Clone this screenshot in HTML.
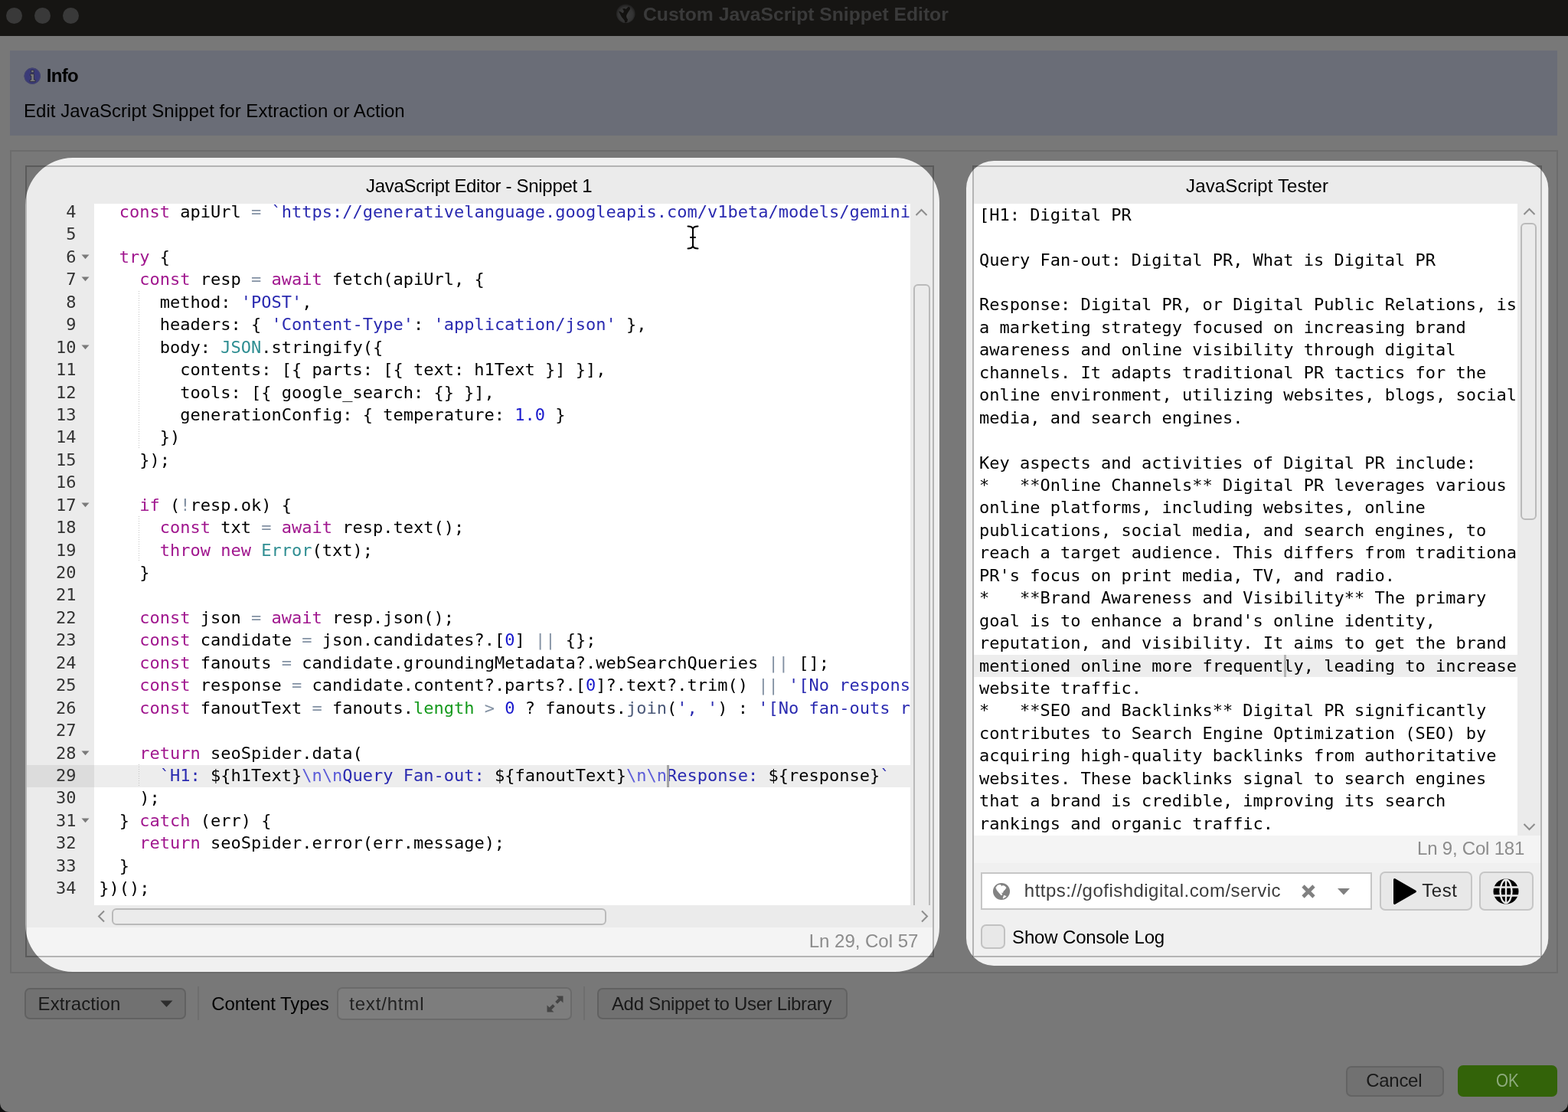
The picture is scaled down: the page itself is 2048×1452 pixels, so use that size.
<!DOCTYPE html>
<html lang="en"><head><meta charset="utf-8"><title>Custom JavaScript Snippet Editor</title>
<style>
*{box-sizing:border-box;margin:0;padding:0}
html,body{width:2048px;height:1452px;overflow:hidden;background:#f0f0f0}
body{position:relative;font-family:"Liberation Sans",sans-serif;font-size:24px;color:#000}
#root{position:absolute;left:0;top:0;width:2048px;height:1452px;will-change:transform}
.abs{position:absolute}
.t{position:absolute;white-space:pre;line-height:1}
.mono{font-family:"DejaVu Sans Mono","Liberation Mono",monospace;font-size:22.01px}
#titlebar{left:0;top:0;width:2048px;height:47px;background:#2c2a27}
.tl{position:absolute;top:9.5px;width:21.5px;height:21.5px;border-radius:50%;background:#727272}
#info{left:13px;top:66px;width:2021px;height:111px;background:#d5dbee}
#group{left:13px;top:196px;width:2022px;height:1075px;border:2px solid #d8d8d8;background:#f0f0f0}
.panel{position:absolute;border:2px solid #b4b4b4;background:#ebebeb}
#lp{left:33px;top:216px;width:1187px;height:1034px}
#rp{left:1270px;top:216px;width:744px;height:1034px}
.code{position:absolute;overflow:hidden;background:#fff}
.ln{position:absolute;left:0;height:29.46px;line-height:29.46px;white-space:pre}
.k{color:#a0168e}.s{color:#2a2ab0}.n{color:#1a1acd}.o{color:#8391a3}.g{color:#14991c}.f{color:#4a5878}.v{color:#2f8e92}.e{color:#5c5cd8}
.sb{position:absolute;border:2px solid #bababa;border-radius:6px;background:#ebebeb}
.btn{position:absolute;border:2px solid #c6c6c6;border-radius:7px;background:#e8e8e8}
</style></head>
<body>
<div id="root">
<div id="titlebar" class="abs">
<div class="tl" style="left:7.5px"></div>
<div class="tl" style="left:44.5px"></div>
<div class="tl" style="left:81.5px"></div>
</div>
<div id="title-text" class="t" style="left:840.00px;top:6.00px;font-size:24.7px;line-height:26px;color:#747474;font-weight:bold;letter-spacing:-0.013px">Custom JavaScript Snippet Editor</div>
<div id="info" class="abs"></div>
<div id="info-h" class="t" style="left:60.78px;top:86.00px;font-size:24px;line-height:26px;color:#000;font-weight:bold;letter-spacing:-0.683px">Info</div>
<div id="info-p" class="t" style="left:31.02px;top:132.00px;font-size:24px;line-height:26px;color:#000;letter-spacing:0.031px">Edit JavaScript Snippet for Extraction or Action</div>
<div id="group" class="abs"></div>
<div id="lp" class="panel"></div>
<div id="rp" class="panel"></div>
<div id="lp-title" class="t" style="left:478.10px;top:229.75px;font-size:24px;line-height:26px;color:#000;letter-spacing:-0.311px">JavaScript Editor - Snippet 1</div>
<div id="rp-title" class="t" style="left:1549.10px;top:229.75px;font-size:24px;line-height:26px;color:#000;letter-spacing:0.143px">JavaScript Tester</div>
<div id="gutter" class="code mono" style="left:35px;top:266px;width:88px;height:916px;background:#ebebeb;color:#333">
<div class="abs" style="left:0;top:733.00px;width:100%;height:29px;background:#dcdcdc"></div>
<div class="ln" style="top:-4.00px;width:64.5px;text-align:right">4</div>
<div class="ln" style="top:25.44px;width:64.5px;text-align:right">5</div>
<div class="ln" style="top:54.88px;width:64.5px;text-align:right">6</div>
<svg class="abs" style="left:70.5px;top:65.88px" width="11" height="7" viewBox="0 0 11 7"><path d="M0.5 0.5 L10.5 0.5 L5.5 6.2 Z" fill="#7a7a7a"/></svg>
<div class="ln" style="top:84.32px;width:64.5px;text-align:right">7</div>
<svg class="abs" style="left:70.5px;top:95.32px" width="11" height="7" viewBox="0 0 11 7"><path d="M0.5 0.5 L10.5 0.5 L5.5 6.2 Z" fill="#7a7a7a"/></svg>
<div class="ln" style="top:113.76px;width:64.5px;text-align:right">8</div>
<div class="ln" style="top:143.20px;width:64.5px;text-align:right">9</div>
<div class="ln" style="top:172.64px;width:64.5px;text-align:right">10</div>
<svg class="abs" style="left:70.5px;top:183.64px" width="11" height="7" viewBox="0 0 11 7"><path d="M0.5 0.5 L10.5 0.5 L5.5 6.2 Z" fill="#7a7a7a"/></svg>
<div class="ln" style="top:202.08px;width:64.5px;text-align:right">11</div>
<div class="ln" style="top:231.52px;width:64.5px;text-align:right">12</div>
<div class="ln" style="top:260.96px;width:64.5px;text-align:right">13</div>
<div class="ln" style="top:290.40px;width:64.5px;text-align:right">14</div>
<div class="ln" style="top:319.84px;width:64.5px;text-align:right">15</div>
<div class="ln" style="top:349.28px;width:64.5px;text-align:right">16</div>
<div class="ln" style="top:378.72px;width:64.5px;text-align:right">17</div>
<svg class="abs" style="left:70.5px;top:389.72px" width="11" height="7" viewBox="0 0 11 7"><path d="M0.5 0.5 L10.5 0.5 L5.5 6.2 Z" fill="#7a7a7a"/></svg>
<div class="ln" style="top:408.16px;width:64.5px;text-align:right">18</div>
<div class="ln" style="top:437.60px;width:64.5px;text-align:right">19</div>
<div class="ln" style="top:467.04px;width:64.5px;text-align:right">20</div>
<div class="ln" style="top:496.48px;width:64.5px;text-align:right">21</div>
<div class="ln" style="top:525.92px;width:64.5px;text-align:right">22</div>
<div class="ln" style="top:555.36px;width:64.5px;text-align:right">23</div>
<div class="ln" style="top:584.80px;width:64.5px;text-align:right">24</div>
<div class="ln" style="top:614.24px;width:64.5px;text-align:right">25</div>
<div class="ln" style="top:643.68px;width:64.5px;text-align:right">26</div>
<div class="ln" style="top:673.12px;width:64.5px;text-align:right">27</div>
<div class="ln" style="top:702.56px;width:64.5px;text-align:right">28</div>
<svg class="abs" style="left:70.5px;top:713.56px" width="11" height="7" viewBox="0 0 11 7"><path d="M0.5 0.5 L10.5 0.5 L5.5 6.2 Z" fill="#7a7a7a"/></svg>
<div class="ln" style="top:732.00px;width:64.5px;text-align:right">29</div>
<div class="ln" style="top:761.44px;width:64.5px;text-align:right">30</div>
<div class="ln" style="top:790.88px;width:64.5px;text-align:right">31</div>
<svg class="abs" style="left:70.5px;top:801.88px" width="11" height="7" viewBox="0 0 11 7"><path d="M0.5 0.5 L10.5 0.5 L5.5 6.2 Z" fill="#7a7a7a"/></svg>
<div class="ln" style="top:820.32px;width:64.5px;text-align:right">32</div>
<div class="ln" style="top:849.76px;width:64.5px;text-align:right">33</div>
<div class="ln" style="top:879.20px;width:64.5px;text-align:right">34</div>
</div>
<div id="code" class="code mono" style="left:123px;top:266px;width:1066px;height:916px">
<div class="abs" style="left:0;top:733.00px;width:100%;height:29px;background:#ededed"></div>
<div class="abs" style="left:58px;top:113.76px;width:1px;height:206.08px;background:repeating-linear-gradient(to bottom,#c4c4c4 0 1px,transparent 1px 3px)"></div>
<div class="abs" style="left:58px;top:408.16px;width:1px;height:58.88px;background:repeating-linear-gradient(to bottom,#c4c4c4 0 1px,transparent 1px 3px)"></div>
<div class="abs" style="left:58px;top:732.00px;width:1px;height:29.44px;background:repeating-linear-gradient(to bottom,#c4c4c4 0 1px,transparent 1px 3px)"></div>
<div class="ln" style="left:6.3px;top:-4.00px">  <span class="k">const</span> apiUrl <span class="o">=</span> <span class="s">`https://generativelanguage.googleapis.com/v1beta/models/gemini</span></div>
<div class="ln" style="left:6.3px;top:25.44px"></div>
<div class="ln" style="left:6.3px;top:54.88px">  <span class="k">try</span> {</div>
<div class="ln" style="left:6.3px;top:84.32px">    <span class="k">const</span> resp <span class="o">=</span> <span class="k">await</span> fetch(apiUrl, {</div>
<div class="ln" style="left:6.3px;top:113.76px">      method: <span class="s">'POST'</span>,</div>
<div class="ln" style="left:6.3px;top:143.20px">      headers: { <span class="s">'Content-Type'</span>: <span class="s">'application/json'</span> },</div>
<div class="ln" style="left:6.3px;top:172.64px">      body: <span class="v">JSON</span>.stringify({</div>
<div class="ln" style="left:6.3px;top:202.08px">        contents: [{ parts: [{ text: h1Text }] }],</div>
<div class="ln" style="left:6.3px;top:231.52px">        tools: [{ google_search: {} }],</div>
<div class="ln" style="left:6.3px;top:260.96px">        generationConfig: { temperature: <span class="n">1.0</span> }</div>
<div class="ln" style="left:6.3px;top:290.40px">      })</div>
<div class="ln" style="left:6.3px;top:319.84px">    });</div>
<div class="ln" style="left:6.3px;top:349.28px"></div>
<div class="ln" style="left:6.3px;top:378.72px">    <span class="k">if</span> (<span class="o">!</span>resp.ok) {</div>
<div class="ln" style="left:6.3px;top:408.16px">      <span class="k">const</span> txt <span class="o">=</span> <span class="k">await</span> resp.text();</div>
<div class="ln" style="left:6.3px;top:437.60px">      <span class="k">throw</span> <span class="k">new</span> <span class="v">Error</span>(txt);</div>
<div class="ln" style="left:6.3px;top:467.04px">    }</div>
<div class="ln" style="left:6.3px;top:496.48px"></div>
<div class="ln" style="left:6.3px;top:525.92px">    <span class="k">const</span> json <span class="o">=</span> <span class="k">await</span> resp.json();</div>
<div class="ln" style="left:6.3px;top:555.36px">    <span class="k">const</span> candidate <span class="o">=</span> json.candidates?.[<span class="n">0</span>] <span class="o">||</span> {};</div>
<div class="ln" style="left:6.3px;top:584.80px">    <span class="k">const</span> fanouts <span class="o">=</span> candidate.groundingMetadata?.webSearchQueries <span class="o">||</span> [];</div>
<div class="ln" style="left:6.3px;top:614.24px">    <span class="k">const</span> response <span class="o">=</span> candidate.content?.parts?.[<span class="n">0</span>]?.text?.trim() <span class="o">||</span> <span class="s">'[No respons</span></div>
<div class="ln" style="left:6.3px;top:643.68px">    <span class="k">const</span> fanoutText <span class="o">=</span> fanouts.<span class="g">length</span> <span class="o">&gt;</span> <span class="n">0</span> ? fanouts.<span class="f">join</span>(<span class="s">', '</span>) : <span class="s">'[No fan-outs r</span></div>
<div class="ln" style="left:6.3px;top:673.12px"></div>
<div class="ln" style="left:6.3px;top:702.56px">    <span class="k">return</span> seoSpider.data(</div>
<div class="ln" style="left:6.3px;top:732.00px">      <span class="s">`H1: </span>${h1Text}<span class="e">\n\n</span><span class="s">Query Fan-out: </span>${fanoutText}<span class="e">\n\n</span><span class="s">Response: </span>${response}<span class="s">`</span></div>
<div class="ln" style="left:6.3px;top:761.44px">    );</div>
<div class="ln" style="left:6.3px;top:790.88px">  } <span class="k">catch</span> (err) {</div>
<div class="ln" style="left:6.3px;top:820.32px">    <span class="k">return</span> seoSpider.error(err.message);</div>
<div class="ln" style="left:6.3px;top:849.76px">  }</div>
<div class="ln" style="left:6.3px;top:879.20px">})();</div>
<div class="abs" style="left:748.00px;top:733.00px;width:3px;height:29px;background:#a2a2a2"></div>
</div>
<svg class="abs" style="left:1194.7px;top:271.5px" width="17" height="11" viewBox="0 0 17 11"><path d="M1.5 9 L8.5 2 L15.5 9" fill="none" stroke="#8c8c8c" stroke-width="2"/></svg>
<div class="sb" style="left:1192.5px;top:371px;width:22px;height:831px;border-bottom-left-radius:0;border-bottom-right-radius:0"></div>
<div class="abs" style="left:35px;top:1182px;width:1183px;height:29px;background:#ebebeb"></div>
<svg class="abs" style="left:127px;top:1188px" width="11" height="17" viewBox="0 0 11 17"><path d="M9 1.5 L2 8.5 L9 15.5" fill="none" stroke="#8c8c8c" stroke-width="2"/></svg>
<svg class="abs" style="left:1202px;top:1188px" width="11" height="17" viewBox="0 0 11 17"><path d="M2 1.5 L9 8.5 L2 15.5" fill="none" stroke="#8c8c8c" stroke-width="2"/></svg>
<div class="sb" style="left:146px;top:1186px;width:646px;height:22px"></div>
<div class="abs" style="left:35px;top:1211px;width:1183px;height:37px;background:#f4f4f4"></div>
<div id="lp-status" class="t" style="left:1056.77px;top:1216.00px;font-size:24px;line-height:26px;color:#8c8c8c;letter-spacing:-0.019px">Ln 29, Col 57</div>
<div id="rtext" class="code mono" style="left:1272px;top:266px;width:710px;height:825px">
<div class="abs" style="left:0;top:589.25px;width:100%;height:28.7px;background:#ededed"></div>
<div class="ln" style="left:7px;top:-0.30px">[H1: Digital PR</div>
<div class="ln" style="left:7px;top:29.14px"></div>
<div class="ln" style="left:7px;top:58.58px">Query Fan-out: Digital PR, What is Digital PR</div>
<div class="ln" style="left:7px;top:88.02px"></div>
<div class="ln" style="left:7px;top:117.46px">Response: Digital PR, or Digital Public Relations, is</div>
<div class="ln" style="left:7px;top:146.90px">a marketing strategy focused on increasing brand</div>
<div class="ln" style="left:7px;top:176.34px">awareness and online visibility through digital</div>
<div class="ln" style="left:7px;top:205.78px">channels. It adapts traditional PR tactics for the</div>
<div class="ln" style="left:7px;top:235.22px">online environment, utilizing websites, blogs, social</div>
<div class="ln" style="left:7px;top:264.66px">media, and search engines.</div>
<div class="ln" style="left:7px;top:294.10px"></div>
<div class="ln" style="left:7px;top:323.54px">Key aspects and activities of Digital PR include:</div>
<div class="ln" style="left:7px;top:352.98px">*   **Online Channels** Digital PR leverages various</div>
<div class="ln" style="left:7px;top:382.42px">online platforms, including websites, online</div>
<div class="ln" style="left:7px;top:411.86px">publications, social media, and search engines, to</div>
<div class="ln" style="left:7px;top:441.30px">reach a target audience. This differs from traditiona</div>
<div class="ln" style="left:7px;top:470.74px">PR's focus on print media, TV, and radio.</div>
<div class="ln" style="left:7px;top:500.18px">*   **Brand Awareness and Visibility** The primary</div>
<div class="ln" style="left:7px;top:529.62px">goal is to enhance a brand's online identity,</div>
<div class="ln" style="left:7px;top:559.06px">reputation, and visibility. It aims to get the brand</div>
<div class="ln" style="left:7px;top:588.50px">mentioned online more frequently, leading to increase</div>
<div class="ln" style="left:7px;top:617.94px">website traffic.</div>
<div class="ln" style="left:7px;top:647.38px">*   **SEO and Backlinks** Digital PR significantly</div>
<div class="ln" style="left:7px;top:676.82px">contributes to Search Engine Optimization (SEO) by</div>
<div class="ln" style="left:7px;top:706.26px">acquiring high-quality backlinks from authoritative</div>
<div class="ln" style="left:7px;top:735.70px">websites. These backlinks signal to search engines</div>
<div class="ln" style="left:7px;top:765.14px">that a brand is credible, improving its search</div>
<div class="ln" style="left:7px;top:794.58px">rankings and organic traffic.</div>
<div class="abs" style="left:404.70px;top:589.25px;width:3px;height:28.7px;background:#b4b4b4"></div>
</div>
<svg class="abs" style="left:1989px;top:271px" width="17" height="11" viewBox="0 0 17 11"><path d="M1.5 9 L8.5 2 L15.5 9" fill="none" stroke="#8c8c8c" stroke-width="2"/></svg>
<svg class="abs" style="left:1989px;top:1074px" width="17" height="11" viewBox="0 0 17 11"><path d="M1.5 2 L8.5 9 L15.5 2" fill="none" stroke="#8c8c8c" stroke-width="2"/></svg>
<div class="sb" style="left:1985.5px;top:291px;width:21.5px;height:388px"></div>
<div class="abs" style="left:1272px;top:1091px;width:740px;height:36px;background:#f4f4f4"></div>
<div class="abs" style="left:1272px;top:1127px;width:740px;height:121px;background:#f0f0f0"></div>
<div id="rp-status" class="t" style="left:1851.02px;top:1095.00px;font-size:24px;line-height:26px;color:#8c8c8c;letter-spacing:-0.211px">Ln 9, Col 181</div>
<div class="abs" style="left:1281px;top:1139px;width:511px;height:49px;background:#fff;border:2px solid #c6c6c6"></div>
<svg class="abs" style="left:1296px;top:1152px" width="24" height="24" viewBox="0 0 24 24"><circle cx="12" cy="11.9" r="11" fill="#828282"/><path d="M4.9 6.9 L7.1 4.1 L10.9 3.4 L12 5.6 L13.4 4.6 L15.9 5 L18.1 6.9 L16.5 9.6 L14.2 11.8 L13.7 13.6 L11.5 13.3 L12.9 16.2 L11.8 16.9 L9.3 14 L6.5 10.7 L5.4 8.5 Z M14.2 21 L15.3 17.3 L18.2 18.5 Z" fill="#fff" stroke="#fff" stroke-width="0.8" stroke-linejoin="round"/></svg>
<div id="url" class="t" style="left:1337.82px;top:1150.00px;font-size:24px;line-height:26px;color:#3c3c3c;letter-spacing:0.471px">https://gofishdigital.com/servic</div>
<svg class="abs" style="left:1699px;top:1154px" width="20" height="20" viewBox="0 0 20 20"><path d="M3 3 L17 17 M17 3 L3 17" fill="none" stroke="#808080" stroke-width="4.6" stroke-linecap="butt"/></svg>
<svg class="abs" style="left:1746px;top:1159px" width="18" height="10" viewBox="0 0 18 10"><path d="M1 1 L17 1 L9 9.5 Z" fill="#808080"/></svg>
<div class="btn" style="left:1802px;top:1137.5px;width:121px;height:51px"></div>
<svg class="abs" style="left:1819px;top:1146px" width="32" height="36" viewBox="0 0 32 36"><path d="M2.5 2.5 L29.5 18 L2.5 33.5 Z" fill="#000" stroke="#000" stroke-width="3" stroke-linejoin="round"/></svg>
<div id="test" class="t" style="left:1857.29px;top:1150.00px;font-size:24px;line-height:26px;color:#222;letter-spacing:0.502px">Test</div>
<div class="btn" style="left:1932px;top:1137.5px;width:71px;height:51px"></div>
<svg class="abs" style="left:1950px;top:1147px" width="34" height="34" viewBox="0 0 34 34"><circle cx="17" cy="17" r="16.5" fill="#000"/><g fill="none" stroke="#e8e8e8" stroke-width="2.4"><ellipse cx="17" cy="17" rx="7.5" ry="15.2"/><path d="M17 1 V33 M1 11.5 H33 M1 22.5 H33"/></g></svg>
<div class="btn" style="left:1281px;top:1207px;width:32px;height:32px;border-radius:7px;border-color:#c2c2c2"></div>
<div id="scl" class="t" style="left:1322.08px;top:1211.00px;font-size:24px;line-height:26px;color:#000;letter-spacing:-0.156px">Show Console Log</div>
<div class="btn" style="left:32px;top:1290px;width:211px;height:41px;background:#e3e3e3;border-color:#c2c2c2"></div>
<div id="ext" class="t" style="left:49.58px;top:1298.00px;font-size:24px;line-height:26px;color:#333;letter-spacing:0.113px">Extraction</div>
<svg class="abs" style="left:209px;top:1306px" width="17" height="10" viewBox="0 0 17 10"><path d="M0.5 0.5 L16.5 0.5 L8.5 9 Z" fill="#5a5a5a"/></svg>
<div class="abs" style="left:258px;top:1288px;width:2px;height:44px;background:#dcdcdc"></div>
<div id="ct" class="t" style="left:276.28px;top:1298.00px;font-size:24px;line-height:26px;color:#000;letter-spacing:-0.060px">Content Types</div>
<div class="btn" style="left:440px;top:1289px;width:307px;height:43px;background:#fafafa;border-color:#d4d4d4"></div>
<div id="th" class="t" style="left:456.19px;top:1298.00px;font-size:24px;line-height:26px;color:#444;letter-spacing:0.830px">text/html</div>
<svg class="abs" style="left:713px;top:1299px" width="24" height="24" viewBox="0 0 24 24"><g fill="#8a8a8a" stroke="none"><path d="M13.5 1.5 H22.5 V10.5 L19.4 7.4 L15 11.8 L12.2 9 L16.6 4.6 Z"/><path d="M10.5 22.5 H1.5 V13.5 L4.6 16.6 L9 12.2 L11.8 15 L7.4 19.4 Z"/></g></svg>
<div class="abs" style="left:762px;top:1288px;width:2px;height:44px;background:#dcdcdc"></div>
<div class="btn" style="left:780px;top:1290px;width:327px;height:41px;background:#e3e3e3;border-color:#c2c2c2"></div>
<div id="add" class="t" style="left:798.89px;top:1298.00px;font-size:24px;line-height:26px;color:#333;letter-spacing:-0.274px">Add Snippet to User Library</div>
<div class="btn" style="left:1758px;top:1391.5px;width:128px;height:40.0px;background:#e3e3e3;border-color:#c6c6c6"></div>
<div id="cancel" class="t" style="left:1784.26px;top:1398.00px;font-size:24px;line-height:26px;color:#333;letter-spacing:-0.292px">Cancel</div>
<div class="btn" style="left:1904px;top:1391px;width:129.5px;height:41px;background:#66c612;border-color:#66c612"></div>
<svg class="abs" style="left:31px;top:88px" width="23" height="23" viewBox="0 0 23 23"><circle cx="11.2" cy="11.2" r="10.7" fill="#7474f0"/><circle cx="11.2" cy="11.2" r="10.2" fill="none" stroke="#8a8ad8" stroke-width="1"/><path d="M9.6 3.6 h3.6 v3.2 h-3.6 z M8.4 8.6 h5 v7.6 h1.8 v2.4 H8 v-2.4 h1.8 V11 H8.4 z" fill="#f4f4f4" stroke="#4a4a6a" stroke-width="0.8"/></svg>
<svg class="abs" style="left:804px;top:5px" width="27" height="27" viewBox="0 0 27 27"><defs><radialGradient id="tg" cx="0.5" cy="0.55" r="0.55"><stop offset="0" stop-color="#7c7c7c"/><stop offset="0.7" stop-color="#666"/><stop offset="1" stop-color="#3c3a38"/></radialGradient></defs><circle cx="13.3" cy="12.8" r="12.3" fill="url(#tg)"/><path d="M17.5 4 C19.5 4.5 19.5 7 18 8.5 C16.5 10.5 15.5 12.5 14.5 14.5 C13.5 16.5 14.5 18.5 16 20.5 L15 24 L12 24.5 C12.5 22 11 20.5 9.5 19 C7.5 17 6.5 14.5 5.5 12.5 L4 9.5 L7 10.5 C8.5 12 9.5 12.5 10.5 11 C11.5 9.5 10 8 9 6.5 L11.5 6 C13 7 14 7 15 5.5 C15.8 4.5 16.5 3.8 17.5 4 Z" fill="#24221f"/></svg>
<svg class="abs" style="left:896px;top:293px" width="18" height="34" viewBox="0 0 18 34"><path d="M2.5 2.5 C6 2.5 8.5 3.5 9 6 C9.5 3.5 12 2.5 15.5 2.5 M2.5 31.5 C6 31.5 8.5 30.5 9 28 C9.5 30.5 12 31.5 15.5 31.5 M9 5 V29 M6 17 H12" fill="none" stroke="#fff" stroke-width="4.5" stroke-linecap="round"/><path d="M2.5 2.5 C6 2.5 8.5 3.5 9 6 C9.5 3.5 12 2.5 15.5 2.5 M2.5 31.5 C6 31.5 8.5 30.5 9 28 C9.5 30.5 12 31.5 15.5 31.5 M9 5 V29 M6 17 H12" fill="none" stroke="#000" stroke-width="2" stroke-linecap="round"/></svg>
<svg class="abs" style="left:0;top:0" width="2048" height="1452" viewBox="0 0 2048 1452"><path fill-rule="evenodd" fill="#000" fill-opacity="0.5" d="M0 0 H2048 V1452 H0 Z M95 206 H1169 A58 58 0 0 1 1227 264 V1211 A58 58 0 0 1 1169 1269 H95 A62 62 0 0 1 33 1207 V268 A62 62 0 0 1 95 206 Z M1298 210 H1986.3 A36 36 0 0 1 2022.3 246 V1225 A36 36 0 0 1 1986.3 1261 H1298 A36 36 0 0 1 1262 1225 V246 A36 36 0 0 1 1298 210 Z"/><path d="M0 1452 V1440 A12 12 0 0 0 12 1452 Z M2048 1452 V1440 A12 12 0 0 1 2036 1452 Z" fill="#111"/></svg>
<div id="ok" class="t" style="left:1953.6px;top:1398px;font-size:24px;line-height:26px;color:#8daa7c;transform:scaleX(0.86);transform-origin:0 0">OK</div>
</div>
</body></html>
